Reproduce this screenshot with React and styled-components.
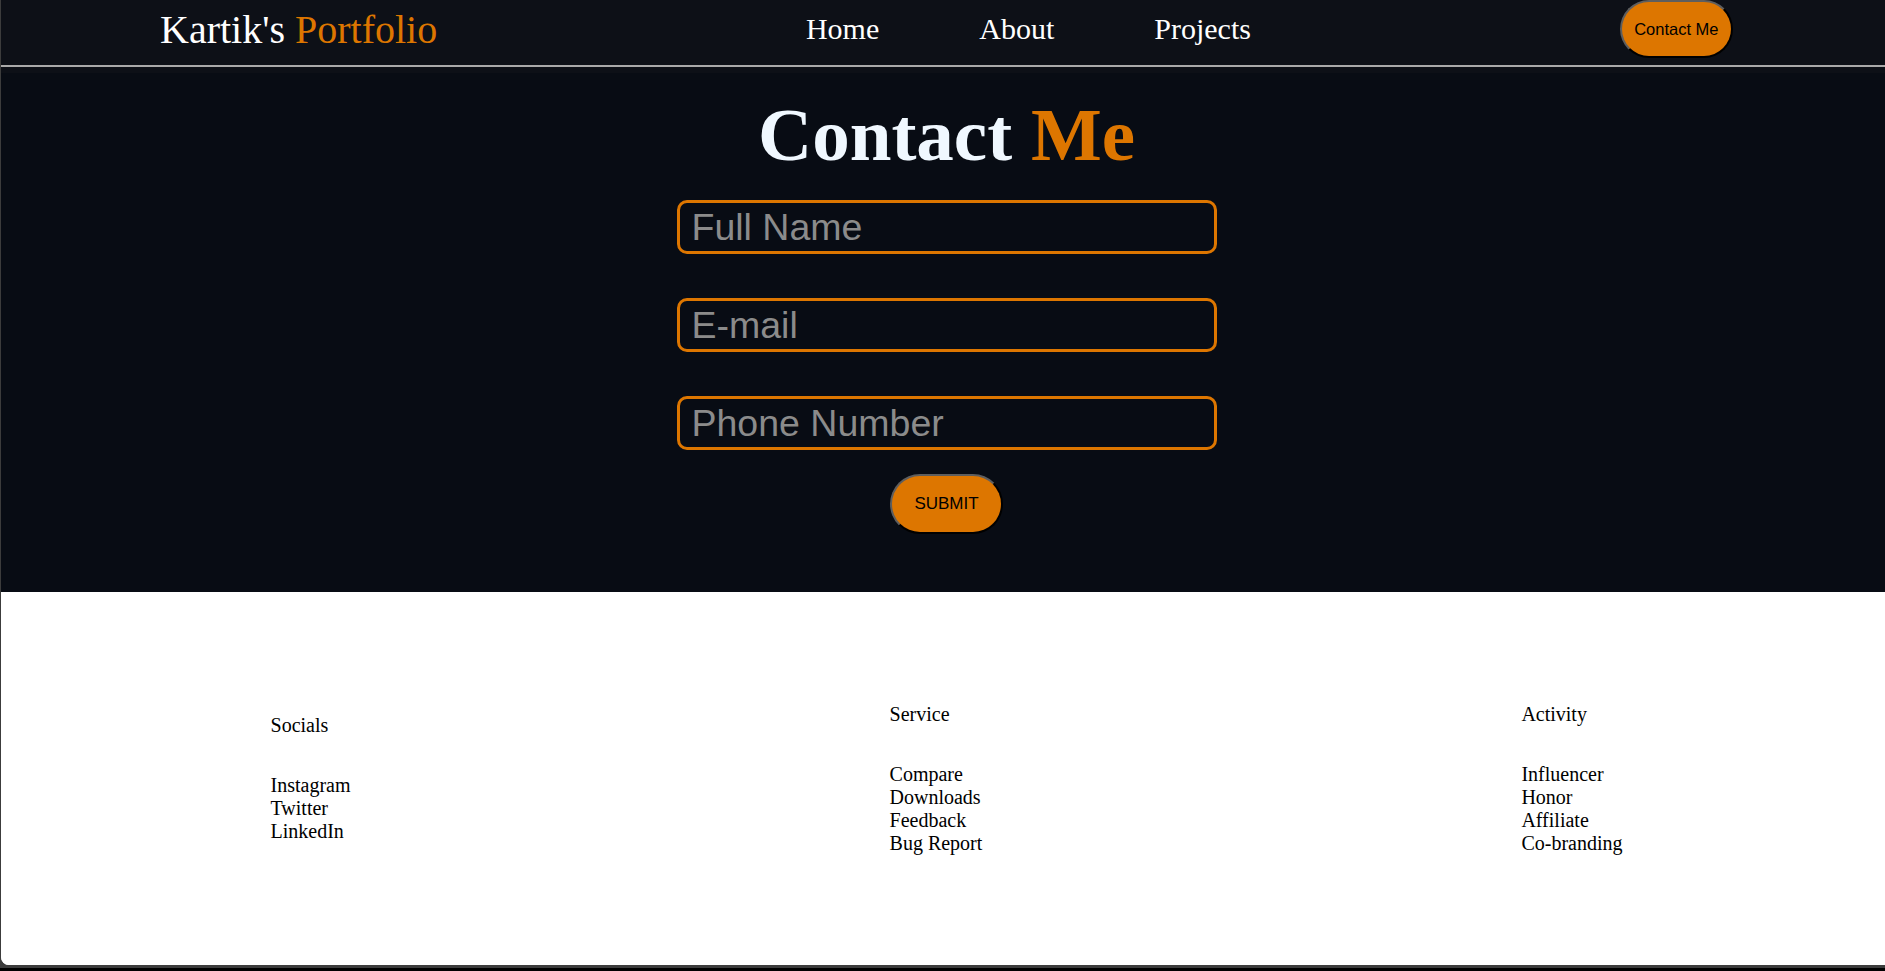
import React from "react";
import styled, { createGlobalStyle } from "styled-components";

const ORANGE = "#dd7600";

const GlobalStyle = createGlobalStyle`
  html, body {
    margin: 0;
    padding: 0;
    background: #000;
    font-family: "Liberation Serif", "Times New Roman", serif;
  }
  *, *::before, *::after { box-sizing: border-box; }
`;

const Frame = styled.div`
  height: 971px;
  background: #000;
  padding-bottom: 3px;
  overflow: hidden;
`;

const Shell = styled.div`
  height: 968px;
  background: #3c3c3c;
  padding: 0 0 3px 1px;
`;

const Page = styled.div`
  width: 1891px;
  height: 965px;
  background: #fff;
  border-bottom-left-radius: 8px;
  overflow: hidden;
  display: flex;
  flex-direction: column;
`;

const Header = styled.header`
  background: #0d1017;
  padding-bottom: 6px;
`;

const NavBar = styled.nav`
  display: flex;
  align-items: center;
  justify-content: space-between;
  height: 67px;
  padding: 0 159px 7px 159px;
  border-bottom: 2px solid #a9a9a9;
`;

const Logo = styled.div`
  font-family: "Liberation Serif", "Times New Roman", serif;
  font-size: 40px;
  color: #fff;
  white-space: nowrap;
`;

const Accent = styled.span`
  color: ${ORANGE};
`;

const NavLinks = styled.div`
  display: flex;
  gap: 100px;
`;

const NavLink = styled.a`
  font-family: "Liberation Serif", "Times New Roman", serif;
  font-size: 30px;
  color: #fff;
  text-decoration: none;
`;

const PillButton = styled.button`
  height: ${(p) => p.$h}px;
  padding: 0 ${(p) => p.$px}px;
  border-radius: ${(p) => p.$h / 2}px;
  border: 2px solid;
  border-color: #5e5e5e #000 #000 #5e5e5e;
  background: ${ORANGE};
  color: #000;
  font-family: "Liberation Sans", Arial, sans-serif;
  font-size: ${(p) => p.$fs}px;
  white-space: nowrap;
  cursor: pointer;
`;

const Main = styled.main`
  height: 519px;
  background: #080c14;
  display: flex;
  flex-direction: column;
  align-items: center;
  padding-top: 19px;
`;

const Title = styled.h1`
  margin: 0;
  font-family: "Liberation Serif", "Times New Roman", serif;
  font-weight: bold;
  font-size: 75px;
  line-height: normal;
  color: #f0f8ff;
`;

const Form = styled.form`
  margin-top: 22px;
  display: flex;
  flex-direction: column;
  align-items: center;
  gap: 24px;
`;

const Fields = styled.div`
  display: flex;
  flex-direction: column;
  gap: 44px;
`;

const Field = styled.input`
  width: 540px;
  height: 54px;
  border: 3px solid ${ORANGE};
  border-radius: 10px;
  background: transparent;
  padding: 0 11px 0 12px;
  font-family: "Liberation Sans", Arial, sans-serif;
  font-size: 37.5px;
  color: #fff;
  outline: none;
  &::placeholder {
    color: #8b8b8b;
  }
`;

const Footer = styled.footer`
  flex: 1;
  background: #fff;
  display: flex;
  align-items: center;
  justify-content: space-around;
  color: #000;
`;

const Column = styled.div`
  display: flex;
  flex-direction: column;
`;

const ColumnTitle = styled.div`
  font-size: 20px;
  line-height: 23px;
  margin-bottom: 37px;
`;

const List = styled.ul`
  margin: 0;
  padding: 0;
  list-style: none;
`;

const Item = styled.li`
  font-size: 20px;
  line-height: 23px;
  white-space: nowrap;
`;

const columns = [
  { title: "Socials", items: ["Instagram", "Twitter", "LinkedIn"] },
  { title: "Service", items: ["Compare", "Downloads", "Feedback", "Bug Report"] },
  { title: "Activity", items: ["Influencer", "Honor", "Affiliate", "Co-branding"] },
];

export default function App() {
  return (
    <>
      <GlobalStyle />
      <Frame>
        <Shell>
          <Page>
            <Header>
              <NavBar>
                <Logo>
                  Kartik's <Accent>Portfolio</Accent>
                </Logo>
                <NavLinks>
                  <NavLink href="#">Home</NavLink>
                  <NavLink href="#">About</NavLink>
                  <NavLink href="#">Projects</NavLink>
                </NavLinks>
                <PillButton type="button" $h={58} $px={12.5} $fs={16.5}>
                  Contact Me
                </PillButton>
              </NavBar>
            </Header>
            <Main>
              <Title>
                Contact <Accent>Me</Accent>
              </Title>
              <Form onSubmit={(e) => e.preventDefault()}>
                <Fields>
                  <Field type="text" placeholder="Full Name" />
                  <Field type="email" placeholder="E-mail" />
                  <Field type="tel" placeholder="Phone Number" />
                </Fields>
                <PillButton type="submit" $h={60} $px={22} $fs={17}>
                  SUBMIT
                </PillButton>
              </Form>
            </Main>
            <Footer>
              {columns.map((c) => (
                <Column key={c.title}>
                  <ColumnTitle>{c.title}</ColumnTitle>
                  <List>
                    {c.items.map((i) => (
                      <Item key={i}>{i}</Item>
                    ))}
                  </List>
                </Column>
              ))}
            </Footer>
          </Page>
        </Shell>
      </Frame>
    </>
  );
}
